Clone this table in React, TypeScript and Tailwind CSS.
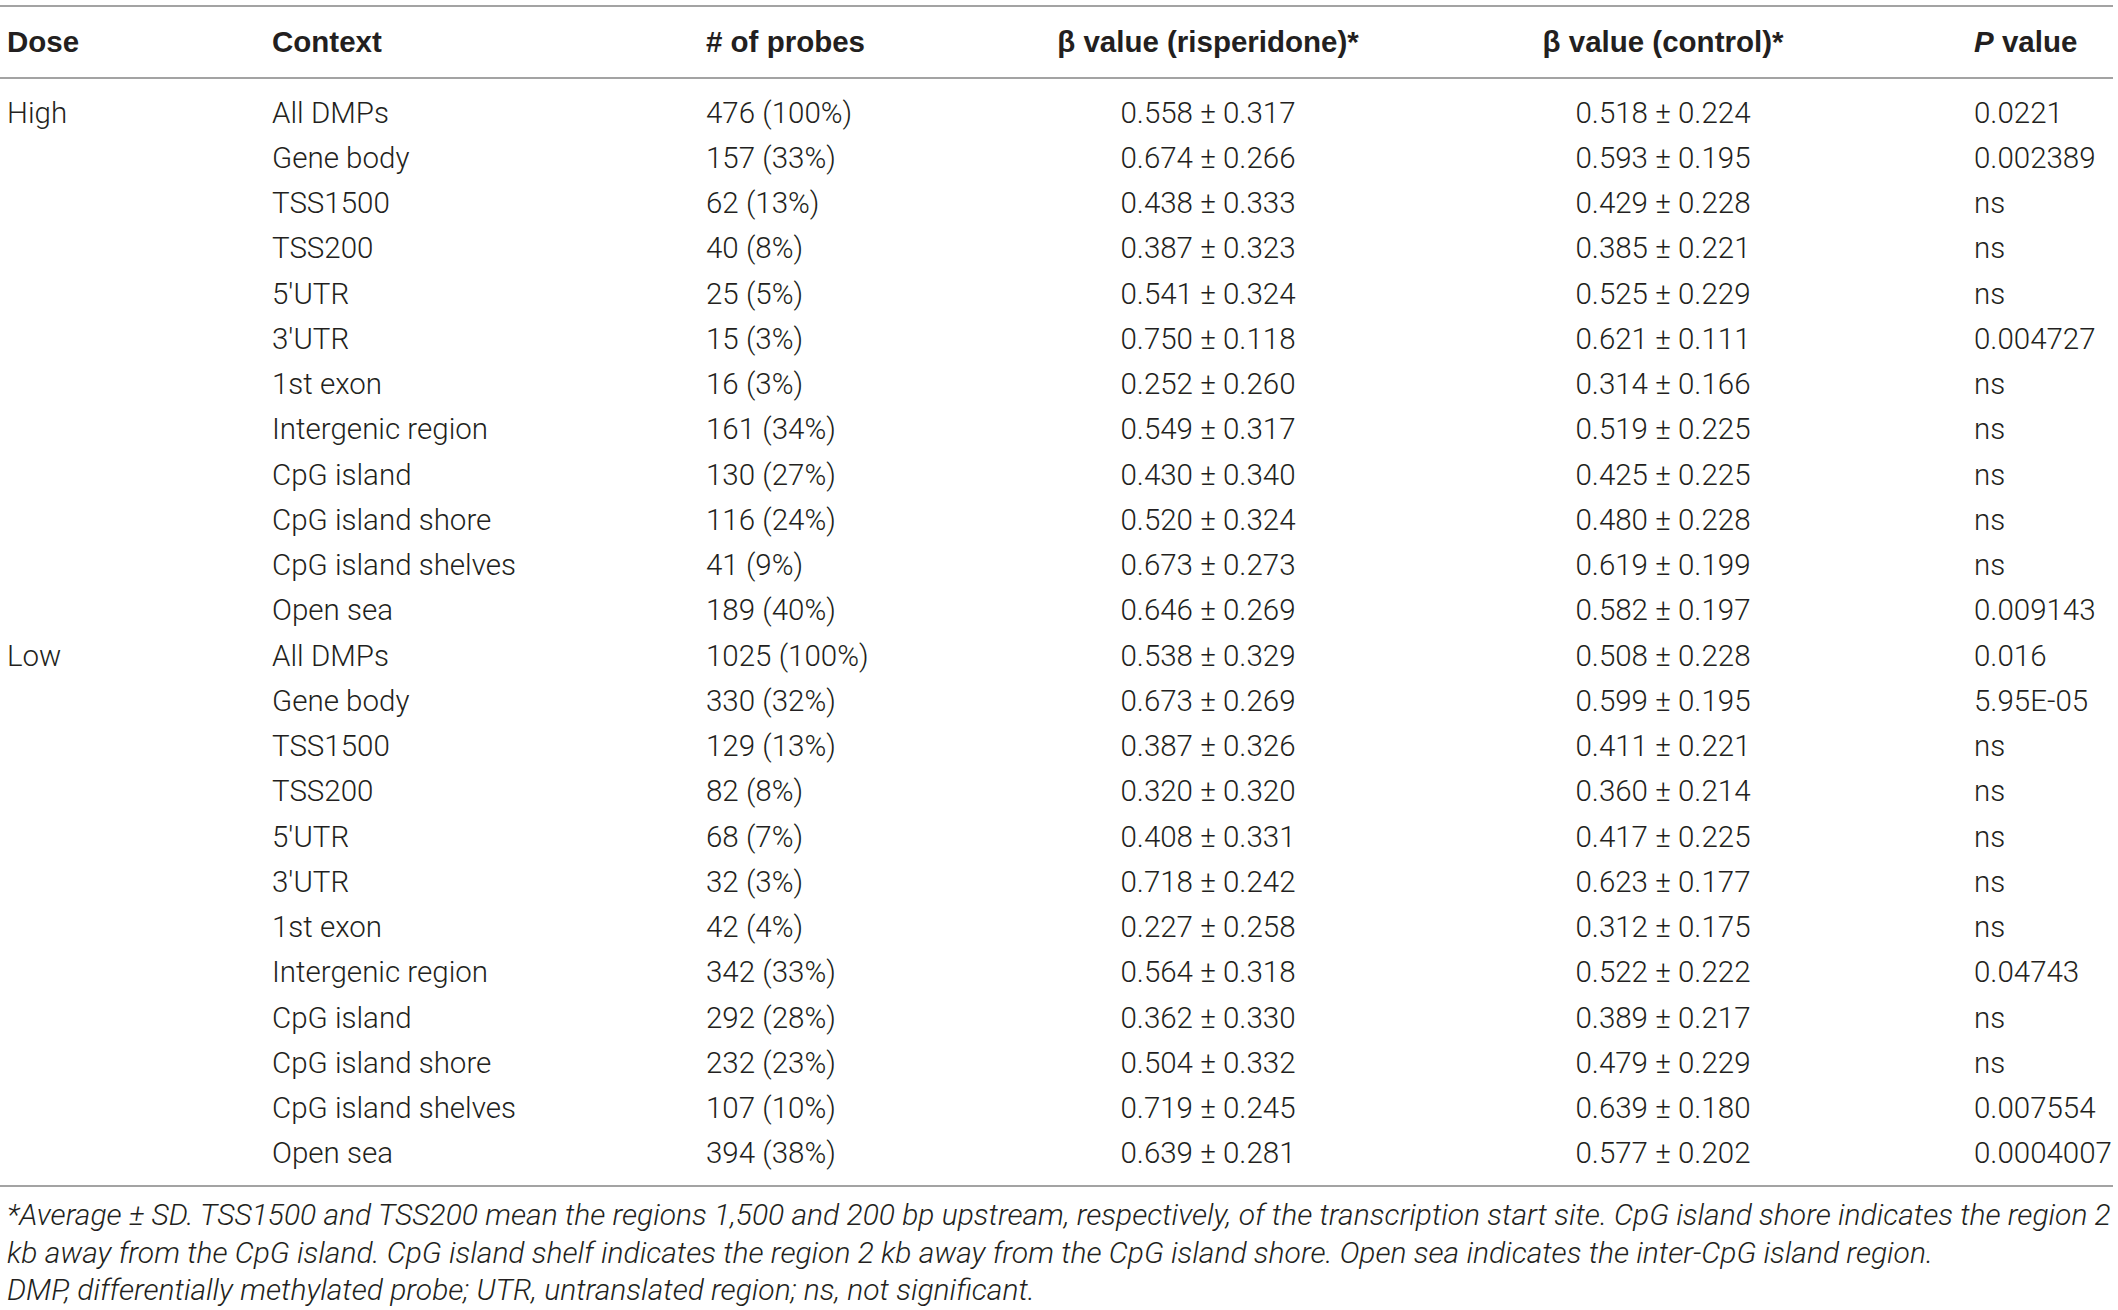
const high = [
  ['All DMPs', '476 (100%)', '0.558 ± 0.317', '0.518 ± 0.224', '0.0221'],
  ['Gene body', '157 (33%)', '0.674 ± 0.266', '0.593 ± 0.195', '0.002389'],
  ['TSS1500', '62 (13%)', '0.438 ± 0.333', '0.429 ± 0.228', 'ns'],
  ['TSS200', '40 (8%)', '0.387 ± 0.323', '0.385 ± 0.221', 'ns'],
  ['5′UTR', '25 (5%)', '0.541 ± 0.324', '0.525 ± 0.229', 'ns'],
  ['3′UTR', '15 (3%)', '0.750 ± 0.118', '0.621 ± 0.111', '0.004727'],
  ['1st exon', '16 (3%)', '0.252 ± 0.260', '0.314 ± 0.166', 'ns'],
  ['Intergenic region', '161 (34%)', '0.549 ± 0.317', '0.519 ± 0.225', 'ns'],
  ['CpG island', '130 (27%)', '0.430 ± 0.340', '0.425 ± 0.225', 'ns'],
  ['CpG island shore', '116 (24%)', '0.520 ± 0.324', '0.480 ± 0.228', 'ns'],
  ['CpG island shelves', '41 (9%)', '0.673 ± 0.273', '0.619 ± 0.199', 'ns'],
  ['Open sea', '189 (40%)', '0.646 ± 0.269', '0.582 ± 0.197', '0.009143'],
]

const low = [
  ['All DMPs', '1025 (100%)', '0.538 ± 0.329', '0.508 ± 0.228', '0.016'],
  ['Gene body', '330 (32%)', '0.673 ± 0.269', '0.599 ± 0.195', '5.95E-05'],
  ['TSS1500', '129 (13%)', '0.387 ± 0.326', '0.411 ± 0.221', 'ns'],
  ['TSS200', '82 (8%)', '0.320 ± 0.320', '0.360 ± 0.214', 'ns'],
  ['5′UTR', '68 (7%)', '0.408 ± 0.331', '0.417 ± 0.225', 'ns'],
  ['3′UTR', '32 (3%)', '0.718 ± 0.242', '0.623 ± 0.177', 'ns'],
  ['1st exon', '42 (4%)', '0.227 ± 0.258', '0.312 ± 0.175', 'ns'],
  ['Intergenic region', '342 (33%)', '0.564 ± 0.318', '0.522 ± 0.222', '0.04743'],
  ['CpG island', '292 (28%)', '0.362 ± 0.330', '0.389 ± 0.217', 'ns'],
  ['CpG island shore', '232 (23%)', '0.504 ± 0.332', '0.479 ± 0.229', 'ns'],
  ['CpG island shelves', '107 (10%)', '0.719 ± 0.245', '0.639 ± 0.180', '0.007554'],
  ['Open sea', '394 (38%)', '0.639 ± 0.281', '0.577 ± 0.202', '0.0004007'],
]

const cols = 'grid grid-cols-[272px_434px_294px_416px_494px_208px] items-center'

function Row({ dose, cells }: { dose: string; cells: string[] }) {
  return (
    <div className={`${cols} h-[45.25px]`}>
      <div className="pl-[7px]">{dose}</div>
      <div className="whitespace-nowrap">{cells[0]}</div>
      <div className="whitespace-nowrap">{cells[1]}</div>
      <div className="text-center whitespace-nowrap">{cells[2]}</div>
      <div className="text-center whitespace-nowrap">{cells[3]}</div>
      <div className="pl-[64px] whitespace-nowrap">{cells[4]}</div>
    </div>
  )
}

export default function App() {
  return (
    <div className="w-[2118px] h-[1310px] overflow-hidden bg-white text-[#231f20] font-['Roboto','Liberation_Sans',sans-serif] font-light text-[29.5px] pt-[5px]">
      <div className="w-[2113px] border-t-2 border-[#a3a3a3]" />
      <div className={`${cols} h-[70px] font-bold font-['Liberation_Sans','Arial',sans-serif] text-[29.5px] whitespace-nowrap`}>
        <div className="pl-[7px]">Dose</div>
        <div>Context</div>
        <div># of probes</div>
        <div className="text-center">β value (risperidone)*</div>
        <div className="text-center">β value (control)*</div>
        <div className="pl-[64px]"><i>P</i> value</div>
      </div>
      <div className="w-[2113px] border-t-2 border-[#a3a3a3]" />
      <div className="pt-[11px] pb-[9px]">
        {high.map((r, i) => <Row key={'h' + i} dose={i === 0 ? 'High' : ''} cells={r} />)}
        {low.map((r, i) => <Row key={'l' + i} dose={i === 0 ? 'Low' : ''} cells={r} />)}
      </div>
      <div className="w-[2113px] border-t-2 border-[#a3a3a3]" />
      <div className="italic text-[30px] leading-[37.5px] pt-[9px] pl-[7px] whitespace-nowrap">
        <div>*Average ± SD. TSS1500 and TSS200 mean the regions 1,500 and 200 bp upstream, respectively, of the transcription start site. CpG island shore indicates the region 2</div>
        <div>kb away from the CpG island. CpG island shelf indicates the region 2 kb away from the CpG island shore. Open sea indicates the inter-CpG island region.</div>
        <div>DMP, differentially methylated probe; UTR, untranslated region; ns, not significant.</div>
      </div>
    </div>
  )
}
